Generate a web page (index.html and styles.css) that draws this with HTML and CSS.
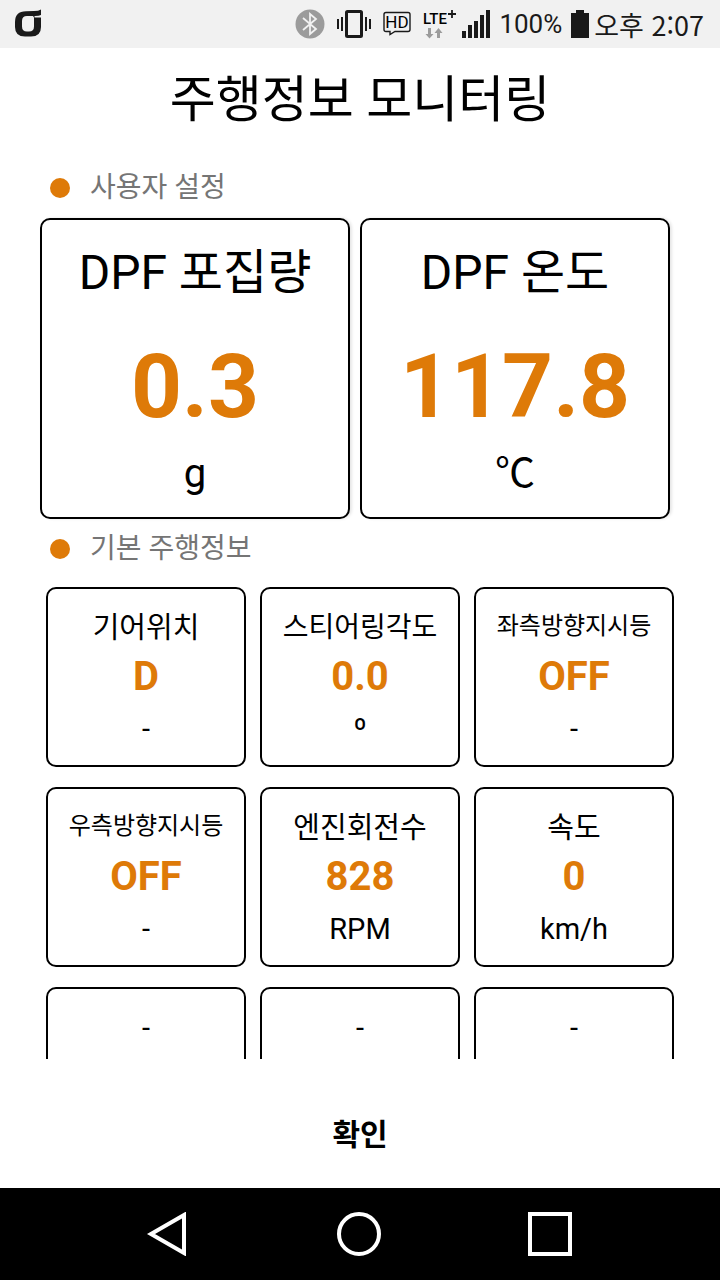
FILE: index.html
```html
<!DOCTYPE html>
<html lang="ko">
<head>
  <meta charset="UTF-8">
  <meta name="viewport" content="width=device-width, initial-scale=1.0">
  <title>주행정보 모니터링</title>
  <link rel="stylesheet" href="styles.css">
</head>

<body>
  <header class="status-bar">
    <svg class="carrier" width="28" height="30" viewBox="0 0 28 30">
      <path fill="#1a1a1a" fill-rule="evenodd" d="M27 0.5V6Q25 7 21 7H20.5V8.500H27V18Q27 27.500 17 27.500H11Q1 27.500 1 18V13Q1 2.500 12 2.300L20 2Q24.500 2 27 0.500ZM13 7Q8 7 8 12V17.500Q8 22.500 13 22.500H15Q20 22.500 20 17.500V8.500L19 7Z"/>
    </svg>
    <div class="status-icons">
      <svg class="bluetooth" width="30" height="30" viewBox="0 0 30 30">
        <circle cx="15" cy="15" r="14.500" fill="#9b9b9b"/>
        <path d="M8 9L21 20L15 25V5L21 10L8 21" fill="none" stroke="#f1f1f1" stroke-width="1.800"/>
      </svg>
      <svg class="vibrate" width="34" height="30" viewBox="0 0 34 30">
        <rect x="9.500" y="2.500" width="15" height="25" rx="1" fill="none" stroke="#1a1a1a" stroke-width="3"/>
        <path d="M1 10V20M5 8V22M29 8V22M33 10V20" stroke="#1a1a1a" stroke-width="2"/>
      </svg>
      <svg class="hd" width="28" height="30" viewBox="0 0 28 30">
        <path d="M3 3.500H25Q27 3.500 27 5.500V20.500Q27 22.500 25 22.500H12L7 25.500V22.500H3Q1 22.500 1 20.500V5.500Q1 3.500 3 3.500Z" fill="none" stroke="#1a1a1a" stroke-width="1.400"/>
        <text class="hd-text" x="14" y="19" text-anchor="middle">HD</text>
      </svg>
      <svg class="lte" width="34" height="30" viewBox="0 0 34 30">
        <text class="lte-text" x="0" y="15">LTE</text>
        <path d="M25 5H33M29 1V9" stroke="#1a1a1a" stroke-width="1.800"/>
        <path d="M5 19H8V25H10.500L6.500 29.500L2.500 25H5ZM14 29V24H11.500L15.500 19L19.500 24H17V29Z" fill="#9b9b9b"/>
      </svg>
      <svg class="signal" width="28" height="30" viewBox="0 0 28 30">
        <path d="M0 22H4V29H0ZM6 16H10V29H6ZM12 12H16V29H12ZM18 6H22V29H18ZM24 1H28V29H24Z" fill="#1a1a1a"/>
      </svg>
      <span class="percent">100%</span>
      <svg class="battery" width="18" height="30" viewBox="0 0 18 30">
        <path d="M5 1H13V4H18V29H0V4H5Z" fill="#1a1a1a"/>
      </svg>
      <span class="time">오후 2:07</span>
    </div>
  </header>

  <main>
    <h1>주행정보 모니터링</h1>

    <h2 class="section">사용자 설정</h2>
    <div class="big-tiles">
      <div class="big-tile">
        <div class="name">DPF 포집량</div>
        <div class="value">0.3</div>
        <div class="unit">g</div>
      </div>
      <div class="big-tile">
        <div class="name">DPF 온도</div>
        <div class="value">117.8</div>
        <div class="unit">℃</div>
      </div>
    </div>

    <h2 class="section">기본 주행정보</h2>
    <div class="tiles">
      <div class="tile">
        <div class="name">기어위치</div>
        <div class="value">D</div>
        <div class="unit">-</div>
      </div>
      <div class="tile">
        <div class="name medium">스티어링각도</div>
        <div class="value">0.0</div>
        <div class="unit">º</div>
      </div>
      <div class="tile">
        <div class="name long">좌측방향지시등</div>
        <div class="value">OFF</div>
        <div class="unit">-</div>
      </div>
      <div class="tile">
        <div class="name long">우측방향지시등</div>
        <div class="value">OFF</div>
        <div class="unit">-</div>
      </div>
      <div class="tile">
        <div class="name">엔진회전수</div>
        <div class="value">828</div>
        <div class="unit">RPM</div>
      </div>
      <div class="tile">
        <div class="name">속도</div>
        <div class="value">0</div>
        <div class="unit">km/h</div>
      </div>
      <div class="tile">
        <div class="name">-</div>
      </div>
      <div class="tile">
        <div class="name">-</div>
      </div>
      <div class="tile">
        <div class="name">-</div>
      </div>
    </div>
  </main>

  <button class="confirm" type="button">확인</button>

  <nav class="nav-bar">
    <button type="button" aria-label="뒤로">
      <svg width="44" height="44" viewBox="0 0 44 44"><path d="M5 22L38 3V41Z"/></svg>
    </button>
    <button type="button" aria-label="홈">
      <svg width="44" height="44" viewBox="0 0 44 44"><circle cx="22" cy="22" r="20"/></svg>
    </button>
    <button type="button" aria-label="최근 앱">
      <svg width="44" height="44" viewBox="0 0 44 44"><rect x="2" y="2" width="40" height="40"/></svg>
    </button>
  </nav>
</body>
</html>
```
FILE: styles.css
```css
* {
  box-sizing: border-box;
}
body {
  margin: 0;
  height: 100vh;
  display: flex;
  flex-direction: column;
  background: #fff;
  color: #000;
  font-family: Roboto, "Noto Sans CJK KR", sans-serif;
}

/* Status bar */
.status-bar {
  flex: none;
  height: 48px;
  padding: 0 16px 0 14px;
  display: flex;
  align-items: center;
  justify-content: space-between;
  background: #f1f1f1;
  color: #1a1a1a;
}
.status-icons {
  display: flex;
  align-items: center;
}
.bluetooth,
.vibrate,
.hd {
  margin-right: 12px;
}
.lte {
  margin-right: 5px;
}
.signal,
.percent {
  margin-right: 9px;
}
.battery {
  margin-right: 5px;
}
.hd-text {
  font-size: 17px;
}
.lte-text {
  font-size: 15px;
  font-weight: 500;
}
.percent {
  font-size: 26px;
}
.time {
  font-family: "Noto Sans CJK KR", sans-serif;
  font-size: 27px;
  white-space: nowrap;
}

/* Content */
main {
  flex: 1;
  min-height: 0;
  overflow: hidden;
}
h1 {
  margin: 0;
  padding: 16px 0 22px;
  font-size: 50px;
  line-height: 72px;
  font-weight: 400;
  text-align: center;
}
.section {
  margin: 0;
  padding-left: 50px;
  display: flex;
  align-items: center;
  gap: 20px;
  height: 60px;
  font-size: 28px;
  line-height: 40px;
  font-weight: 400;
  color: #757575;
}
.section::before {
  content: "";
  width: 20px;
  height: 20px;
  border-radius: 50%;
  background: #de7a08;
}
.big-tiles {
  display: grid;
  grid-template-columns: 1fr 1fr;
  gap: 10px;
  padding: 0 50px 0 40px;
}
.big-tile,
.tile {
  border: 2px solid #000;
  border-radius: 10px;
  text-align: center;
  white-space: nowrap;
}
.big-tile {
  min-height: 301px;
  padding-top: 18px;
  box-shadow: 2px 0 3px rgba(0, 0, 0, 0.1);
}
.big-tile .name {
  font-size: 48px;
  line-height: 70px;
}
.big-tile .value {
  font-size: 89px;
  line-height: 158px;
}
.big-tile .unit {
  font-size: 40px;
  line-height: 16px;
}
.tiles {
  display: grid;
  grid-template-columns: 1fr 1fr 1fr;
  gap: 20px 14px;
  padding: 8px 46px 0;
}
.tile {
  min-height: 180px;
  padding-top: 17px;
}
.tile .name {
  font-size: 29px;
  line-height: 44px;
}
.tile .medium {
  font-size: 28px;
}
.tile .long {
  padding-bottom: 4px;
  font-size: 24px;
  line-height: 40px;
}
.tile .value {
  font-size: 40px;
  line-height: 54px;
}
.value {
  font-weight: 700;
  color: #de7a08;
}
.tile .unit {
  font-size: 29px;
  line-height: 50px;
}

/* Bottom */
.confirm {
  flex: none;
  height: 129px;
  padding: 16px 0 0;
  border: 0;
  background: #fff;
  color: #000;
  font-family: inherit;
  font-size: 30px;
  font-weight: 700;
}
.nav-bar {
  flex: none;
  height: 92px;
  display: flex;
  align-items: center;
  justify-content: center;
  gap: 147px;
  padding-right: 2px;
  background: #000;
}
.nav-bar button {
  padding: 0;
  border: 0;
  background: none;
  line-height: 0;
}
.nav-bar svg {
  fill: none;
  stroke: #fff;
  stroke-width: 4px;
}
```
